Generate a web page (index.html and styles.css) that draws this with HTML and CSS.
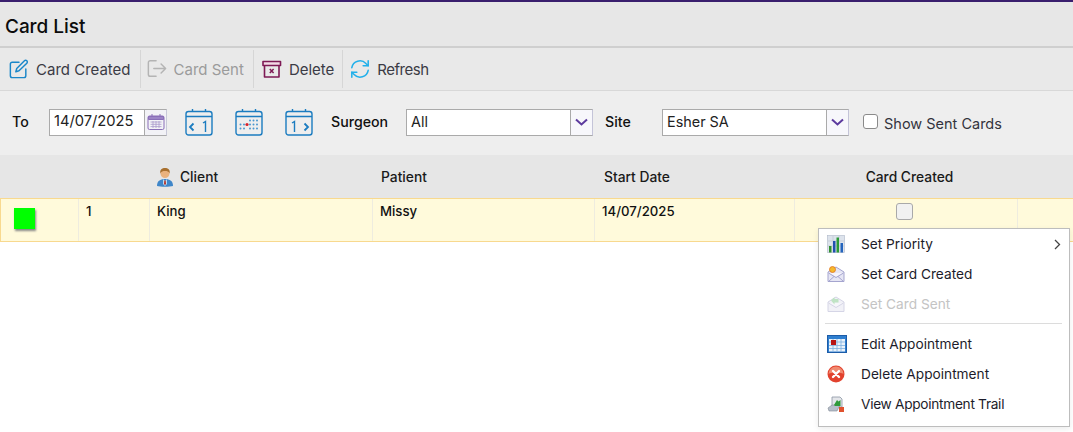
FILE: index.html
```html
<!DOCTYPE html>
<html lang="en">
<head>
<meta charset="utf-8">
<title>Card List</title>
<link rel="stylesheet" href="styles.css">
</head>
<body>
<div class="page">
  <header class="title-bar"><h1 class="title">Card List</h1></header>

  <nav class="toolbar">
    <button class="tool">
      <svg class="tool-icon" viewBox="0 0 22 22" fill="none" stroke="#1b87c9" stroke-width="1.6" stroke-linecap="round" stroke-linejoin="round"><path d="M11 3.500H3.500a2 2 0 0 0-2 2v13a2 2 0 0 0 2 2h13a2 2 0 0 0 2-2V11"/><path d="M8.500 10.500 17 2a1.600 1.600 0 0 1 2.600 2.600L11 13l-3.500 1z"/></svg>
      <span>Card Created</span>
    </button>
    <button class="tool tool-off">
      <svg class="tool-icon" viewBox="0 0 22 22" fill="none" stroke="#b4b4b4" stroke-width="1.6" stroke-linecap="round" stroke-linejoin="round"><path d="M10 2H3.500a2 2 0 0 0-2 2v13a2 2 0 0 0 2 2H10"/><path d="M7.500 10.500H20.500M15.500 5.500l5 5-5 5"/></svg>
      <span>Card Sent</span>
    </button>
    <button class="tool tool-del">
      <svg class="tool-icon" viewBox="0 0 20 20" fill="none" stroke="#7e1a55" stroke-width="1.6" stroke-linejoin="round"><rect x="1" y="2.500" width="17.500" height="4" fill="#f3d9e6"/><path d="M2.500 6.500V18h14.500V6.500"/><path d="M7.800 10l3.800 4M11.600 10l-3.800 4" stroke-width="1.500"/></svg>
      <span>Delete</span>
    </button>
    <button class="tool tool-last">
      <svg class="tool-icon" viewBox="0 0 22 22" fill="none" stroke="#22b0ea" stroke-width="1.700" stroke-linecap="round" stroke-linejoin="round"><path d="M2 9.500A9 9 0 0 1 17.500 5L20 7.500"/><path d="M20 2v5.500h-5.500"/><path d="M20 12.500A9 9 0 0 1 4.500 17L2 14.500"/><path d="M2 20v-5.500h5.500"/></svg>
      <span class="tool-refresh">Refresh</span>
    </button>
  </nav>

  <section class="filters">
    <label class="flabel flabel-to">To</label>
    <div class="date-field">
      <span class="date-value">14/07/2025</span>
      <span class="date-btn">
        <svg width="18" height="18" viewBox="0 0 18 18" fill="none" stroke="#8a6fb8" stroke-width="1"><rect x="1" y="3" width="16" height="13.500" rx="1.500"/><path d="M1.500 3.500h15v3h-15z" fill="#9c84c6"/><path d="M5 1v3M13 1v3"/><path d="M3.500 9h11M3.500 11.300h11M3.500 13.600h11M6 8v7M9 8v7M12 8v7" stroke="#a999cc" stroke-width=".8"/></svg>
      </span>
    </div>
    <svg class="cal cal-prev" viewBox="0 0 28 28" fill="none" stroke="#1b7cc0" stroke-width="1.400"><rect x="1" y="3.500" width="26" height="23.500" rx="2.500"/><path d="M1 8.500h26M7.500 1v3M20.500 1v3"/><path d="M8.500 15.500l-3.500 3.500 3.500 3.500" stroke-width="1.800"/><path d="M18 15l2.500-1.500V24"/></svg>
    <svg class="cal cal-today" viewBox="0 0 28 28" fill="none" stroke="#1b7cc0" stroke-width="1.400"><rect x="1" y="3.500" width="26" height="23.500" rx="2.500"/><path d="M1 8.500h26M7.500 1v3M20.500 1v3"/><g stroke="none" fill="#4b97cf"><circle cx="15" cy="12.500" r="1"/><circle cx="18.500" cy="12.500" r="1"/><circle cx="22" cy="12.500" r="1"/><circle cx="5.500" cy="16.500" r="1"/><circle cx="9" cy="16.500" r="1"/><circle cx="15" cy="16.500" r="1"/><circle cx="18.500" cy="16.500" r="1"/><circle cx="22" cy="16.500" r="1"/><circle cx="5.500" cy="20.500" r="1"/><circle cx="9" cy="20.500" r="1"/><circle cx="15" cy="20.500" r="1"/><circle cx="18.500" cy="20.500" r="1"/><circle cx="22" cy="20.500" r="1"/></g><circle cx="12" cy="16.500" r="1.600" fill="#d8232a" stroke="none"/></svg>
    <svg class="cal cal-next" viewBox="0 0 28 28" fill="none" stroke="#1b7cc0" stroke-width="1.400"><rect x="1" y="3.500" width="26" height="23.500" rx="2.500"/><path d="M1 8.500h26M7.500 1v3M20.500 1v3"/><path d="M19.500 15.500l3.500 3.500-3.500 3.500" stroke-width="1.800"/><path d="M7 15l2.500-1.500V24"/></svg>
    <label class="flabel flabel-surgeon">Surgeon</label>
    <div class="select select-surgeon">
      <span class="select-value">All</span>
      <span class="select-btn"><svg width="13" height="8" viewBox="0 0 13 8" fill="none" stroke="#5c3a9e" stroke-width="2"><path d="M1 1.500l5.500 5 5.500-5"/></svg></span>
    </div>
    <label class="flabel flabel-site">Site</label>
    <div class="select select-site">
      <span class="select-value">Esher SA</span>
      <span class="select-btn"><svg width="13" height="8" viewBox="0 0 13 8" fill="none" stroke="#5c3a9e" stroke-width="2"><path d="M1 1.500l5.500 5 5.500-5"/></svg></span>
    </div>
    <span class="check check-sent"></span>
    <span class="show-sent">Show Sent Cards</span>
  </section>

  <div class="grid grid-head">
    <div class="hc"></div>
    <div class="hc"></div>
    <div class="hc hc-client">
      <svg class="client-icon" width="18" height="20" viewBox="0 0 18 20"><path d="M1 19c0-5 3-7 8-7s8 2 8 7c-3 1-13 1-16 0z" fill="#3f86c9"/><path d="M7 12l2 2 2-2 0 5-2 2-2-2z" fill="#b9dcf2"/><path d="M8.300 13.500h1.400L10 17l-1 1-1-1z" fill="#b5352f"/><circle cx="9" cy="6.500" r="4.500" fill="#eab27d"/><path d="M4.300 6.500C3.700 2.500 6 1 9 1s5.300 1.500 4.700 5.500C13 4.500 11 4 9 4S5 4.500 4.300 6.500z" fill="#a8702f"/></svg>
      <span>Client</span>
    </div>
    <div class="hc hc-patient">Patient</div>
    <div class="hc hc-date">Start Date</div>
    <div class="hc hc-created">Card Created</div>
    <div class="hc"></div>
  </div>

  <div class="grid grid-row">
    <div class="rc rc-flag"><span class="flag"></span></div>
    <div class="rc rc-num">1</div>
    <div class="rc rc-client">King</div>
    <div class="rc rc-patient">Missy</div>
    <div class="rc rc-date">14/07/2025</div>
    <div class="rc rc-check"><span class="check check-row"></span></div>
    <div class="rc rc-end"></div>
  </div>

  <ul class="menu">
    <li class="mi">
      <svg class="mi-icon" viewBox="0 0 18 18"><rect x=".5" y=".5" width="17" height="17" fill="#dde3ec" stroke="#aeb8c8" stroke-width=".6"/><path d="M1 6h16M1 11h16M6 1v16M12 1v16" stroke="#b9c2d0" stroke-width=".6"/><path d="M2 11h2.500v6.500H2z" fill="#2f8f2f"/><path d="M6 6h2.500v11.500H6z" fill="#1f4fb0"/><path d="M9.500 2.500H12v15H9.500z" fill="#2a9a36"/><path d="M13.500 8H16v9.500h-2.500z" fill="#2464bd"/></svg>
      <span class="mi-text">Set Priority</span>
      <svg class="mi-arrow" width="7" height="11" viewBox="0 0 7 11" fill="none" stroke="#444" stroke-width="1.300"><path d="M1 1l4.500 4.500L1 10"/></svg>
    </li>
    <li class="mi">
      <svg class="mi-icon" viewBox="0 0 18 18"><path d="M1 7l8-5 8 5v9.500H1z" fill="#e6e6f4" stroke="#a5a5cf" stroke-width="1"/><path d="M1.500 8l7.500 4.500L16.500 8" fill="#f6f4fb" stroke="#a5a5cf" stroke-width="1"/><path d="M1.500 16.500L7 11.500M16.500 16.500L11 11.500" stroke="#a5a5cf" stroke-width="1"/><circle cx="5.500" cy="4.500" r="3" fill="#f5b92c" stroke="#e1741f" stroke-width=".8"/></svg>
      <span class="mi-text">Set Card Created</span>
    </li>
    <li class="mi mi-off">
      <svg class="mi-icon" viewBox="0 0 18 18"><path d="M1 7l8-5 8 5v9.500H1z" fill="#f1f1f7" stroke="#d5d5e6" stroke-width="1"/><path d="M1.500 8l7.500 4.500L16.500 8" fill="#f6f6fa" stroke="#d5d5e6" stroke-width="1"/><path d="M4 5.500L7.500 2v2h4v3.500h-4v2z" fill="#bfe3c4"/></svg>
      <span class="mi-text">Set Card Sent</span>
    </li>
    <li class="mi-sep"></li>
    <li class="mi">
      <svg class="mi-icon mi-icon-wide" viewBox="0 0 20 18"><rect x=".5" y=".5" width="19" height="17" fill="#2f7fd0" stroke="#1c5ca8"/><rect x="2" y="4" width="16" height="12.500" fill="#eaf2fb"/><path d="M2 7h16M2 10.500h16M2 13.500h16M6 4v12.500M10 4v12.500M14 4v12.500" stroke="#7fb0e0" stroke-width=".8"/><rect x="4" y="5" width="5" height="5" fill="#b81414"/></svg>
      <span class="mi-text">Edit Appointment</span>
    </li>
    <li class="mi">
      <svg class="mi-icon" viewBox="0 0 18 18"><circle cx="9" cy="9" r="8.500" fill="#e2422e"/><path d="M1.500 9a7.500 7.500 0 0 1 15 0c-3-2-12-2-15 0z" fill="#f08a70"/><path d="M6 6l6 6M12 6l-6 6" stroke="#fff" stroke-width="2.400" stroke-linecap="round"/></svg>
      <span class="mi-text">Delete Appointment</span>
    </li>
    <li class="mi">
      <svg class="mi-icon" viewBox="0 0 18 18"><path d="M5 2h8l2 2v8H5z" fill="#e4e6ea" stroke="#8c96a3" stroke-width=".8"/><path d="M1 13l4-3h8l-3 6H2z" fill="#b7bfca" stroke="#7f8894" stroke-width=".6"/><path d="M7 10l3-5 1.500 1.500 2-1.500v6H8z" fill="#2f9a3a"/><rect x="12" y="12" width="5" height="5" fill="#e0522e"/></svg>
      <span class="mi-text mi-text-tight">View Appointment Trail</span>
    </li>
  </ul>
</div>
</body>
</html>
```
FILE: styles.css
```css
* { box-sizing: border-box; }
html, body { margin: 0; padding: 0; background: #fff; }
body { font-family: "Inter", "Liberation Sans", sans-serif; color: #111; font-size: 14px; }
.page { position: relative; width: 1073px; height: 432px; overflow: hidden; border-top: 2px solid #3a1f6e; }

.title-bar { height: 46px; background: #e7e7e7; border-bottom: 2px solid #cfcfcf; display: flex; align-items: center; padding: 4px 0 0 5px; }
.title { margin: 0; font-size: 19px; font-weight: 500; color: #0c0c0c; letter-spacing: -.05px; }

.toolbar { height: 43px; background: #e9e9e9; border-bottom: 1px solid #d8d8d8; display: flex; align-items: center; }
.tool { height: 38px; border: 0; background: none; font: inherit; color: #3b3b45; display: flex; align-items: center; gap: 7px; padding: 0 9px 0 9px; border-right: 1px solid #d6d6d6; font-size: 15px; }
.tool-off { color: #9b9b9b; padding-left: 6px; padding-right: 9px; }
.tool-del { padding-left: 8px; padding-right: 8px; }
.tool-last { border-right: 0; padding-left: 7px; }
.tool-refresh { letter-spacing: -.5px; }
.tool-icon { width: 20px; height: 20px; flex: none; }

.filters { height: 64px; background: #eeeeee; display: flex; align-items: center; padding-bottom: 2px; }
.flabel { font-size: 14.2px; font-weight: 500; color: #111; padding-bottom: 2px; }
.flabel-to { margin-left: 12px; width: 37px; }
.date-field { width: 118px; height: 27px; display: flex; background: #fff; border: 1px solid #aaa; border-right-color: #c8c8d8; }
.date-value { flex: 1; font-size: 14.7px; padding-left: 4px; line-height: 23px; border-right: 1px solid #aaa; color: #222; }
.date-btn { width: 21px; background: #f2f2f6; display: flex; align-items: center; justify-content: center; }
.cal { width: 28px; height: 28px; flex: none; }
.cal-prev { margin-left: 18px; }
.cal-today { margin-left: 22px; }
.cal-next { margin-left: 22px; }
.flabel-surgeon { margin-left: 18px; width: 75px; }
.select { height: 27px; background: #fff; border: 1px solid #aaa; border-right-color: #c4c4d8; display: flex; }
.select-surgeon { width: 187px; }
.select-site { width: 187px; }
.select-value { flex: 1; font-size: 14.4px; padding-left: 4px; line-height: 23px; color: #222; border-right: 1px solid #aaa; }
.select-btn { width: 21px; background: #f7f7fb; display: flex; align-items: center; justify-content: center; }
.flabel-site { margin-left: 12px; width: 57px; }
.check { display: block; flex: none; border: 1px solid #8a8a8a; border-radius: 3px; }
.check-sent { width: 15px; height: 15px; margin-left: 14px; background: #fff; margin-top: -1px; }
.show-sent { margin-left: 6px; font-size: 14.5px; color: #33333d; margin-top: 3px; }

.grid { display: grid; grid-template-columns: 78px 71px 223px 222px 200px 223px 56px; }
.grid-head { height: 43px; background: #e6e6e6; font-size: 13.8px; font-weight: 500; color: #1a1a1a; }
.hc { display: flex; align-items: center; }
.hc-client { padding-left: 7px; gap: 6px; }
.hc-patient { padding-left: 9px; }
.hc-date { padding-left: 10px; }
.hc-created { justify-content: center; padding-left: 8px; }
.client-icon { flex: none; }

.grid-row { height: 44px; background: #fffadb; border: 1px solid #f8d98f; border-width: 1px 0 1px 1px; font-size: 13.2px; font-weight: 500; }
.rc { border-right: 1px solid #eeecdf; padding: 4px 0 0 7px; }
.rc-end { border-right: 0; }
.rc-flag { padding: 9px 0 0 13px; }
.flag { display: block; width: 21px; height: 21px; background: #00ff00; box-shadow: 1px 2px 2px #888; }
.rc-check { display: flex; justify-content: center; padding: 4px 4px 0 0; }
.check-row { width: 17px; height: 17px; background: #f1f1f1; border-color: #a9a9a9; }

.menu { position: absolute; left: 818px; top: 226px; width: 252px; height: 199px; margin: 0; padding: 0; list-style: none; background: #fff; border: 1px solid #bdbdbd; box-shadow: 0 2px 6px rgba(0,0,0,.08); font-size: 13.7px; color: #1c1c2a; }
.mi { height: 30px; display: flex; align-items: center; position: relative; padding-left: 8px; }
.mi-icon { width: 18px; height: 18px; flex: none; }
.mi-icon-wide { width: 20px; }
.mi-text { position: absolute; left: 42px; }
.mi-text-tight { letter-spacing: -.3px; }
.mi-arrow { position: absolute; right: 8px; top: 10px; }
.mi-off { color: #c4c4c4; }
.mi-sep { height: 1px; margin: 4px 7px 5px 6px; background: #dcdcdc; }
```
